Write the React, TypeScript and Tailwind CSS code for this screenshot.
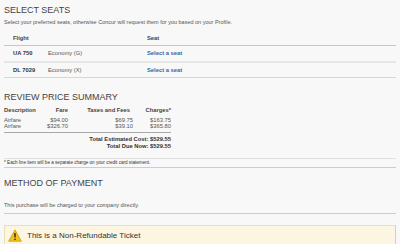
const seats = [
  { flight: "UA 750", cabin: "Economy (G)" },
  { flight: "DL 7029", cabin: "Economy (X)" },
];

const prices = [
  { desc: "Airfare", fare: "$94.00", taxes: "$69.75", charges: "$163.75" },
  { desc: "Airfare", fare: "$326.70", taxes: "$39.10", charges: "$365.80" },
];

const WarnIcon = () => (
  <svg width="14" height="13" viewBox="0 0 14 13" className="shrink-0">
    <path d="M7 0.8 L13.3 12.2 L0.7 12.2 Z" fill="#f3c316" stroke="#c99a0a" strokeWidth="0.8" strokeLinejoin="round" />
    <rect x="6.3" y="4" width="1.4" height="4.6" rx="0.5" fill="#222" />
    <rect x="6.3" y="9.6" width="1.4" height="1.4" rx="0.3" fill="#222" />
  </svg>
);

export default function App() {
  return (
    <div className="w-[400px] h-[244px] overflow-hidden bg-[#f8f8f8] px-[4px] pt-[4px] text-[#555] font-['Liberation_Sans',Arial,sans-serif]">
      <h2 className="h-[13px] leading-[13px] text-[9px] text-[#444]">SELECT SEATS</h2>
      <p className="h-[10px] leading-[10px] text-[5.5px] text-[#555]">
        Select your preferred seats, otherwise Concur will request them for you based on your Profile.
      </p>

      <div className="mt-[5px] text-[5.8px]">
        <div className="flex h-[14px] items-center border-b border-[#c8c8c8] font-bold text-[#444]">
          <span className="w-[143px] pl-[9px]">Flight</span>
          <span>Seat</span>
        </div>
        {seats.map((s, i) => (
          <div
            key={s.flight}
            className={
              i === 0
                ? "flex h-[17px] items-center border-b-2 border-[#e6e6e6]"
                : "flex h-[15px] items-center border-b border-[#d6d6d6]"
            }
          >
            <span className="w-[44px] pl-[9px] font-bold text-[#333]">{s.flight}</span>
            <span className="w-[99px]">{s.cabin}</span>
            <span className="font-bold text-[#2d6aae]">Select a seat</span>
          </div>
        ))}
      </div>

      <h2 className="mt-[13px] h-[13px] leading-[13px] text-[9px] text-[#444]">REVIEW PRICE SUMMARY</h2>
      <div className="w-[167px] text-[5.8px]">
        <div className="grid h-[13px] grid-cols-[38px_26px_65px_38px] items-center font-bold text-[#444]">
          <span>Description</span>
          <span className="text-right">Fare</span>
          <span className="text-right pr-[3px]">Taxes and Fees</span>
          <span className="text-right">Charges*</span>
        </div>
        <div className="border-b border-[#a8a8a8] pb-[3px]">
          {prices.map((p, i) => (
            <div key={i} className="grid h-[6px] grid-cols-[38px_26px_65px_38px] items-center leading-[6px]">
              <span>{p.desc}</span>
              <span className="text-right">{p.fare}</span>
              <span className="text-right">{p.taxes}</span>
              <span className="text-right">{p.charges}</span>
            </div>
          ))}
        </div>
        <div className="mt-[3px] text-right font-bold text-[#333]">
          <div className="h-[7px] leading-[7px]">Total Estimated Cost: $529.55</div>
          <div className="h-[7px] leading-[7px]">Total Due Now: $529.55</div>
        </div>
      </div>

      <div className="mt-[8px] border-b border-[#e0e0e0]" />
      <div className="flex h-[9px] items-center border-b border-[#cccccc] text-[4.6px] text-[#333]">
        * Each line item will be a separate charge on your credit card statement.
      </div>

      <h2 className="mt-[9px] h-[13px] leading-[13px] text-[9px] text-[#444]">METHOD OF PAYMENT</h2>
      <p className="mt-[11px] h-[9px] leading-[9px] text-[5.5px] text-[#555]">
        This purchase will be charged to your company directly.
      </p>
      <div className="mt-[3px] border-b border-[#cccccc]" />

      <div className="mt-[11px] flex h-[30px] items-start gap-[5px] border border-[#ecdfb8] border-r-[#ddd0a6] bg-[#fcf5e2] pl-[3px] pt-[3px]">
        <WarnIcon />
        <span className="text-[8px] leading-[13px] text-[#333]">This is a Non-Refundable Ticket</span>
      </div>
    </div>
  );
}
